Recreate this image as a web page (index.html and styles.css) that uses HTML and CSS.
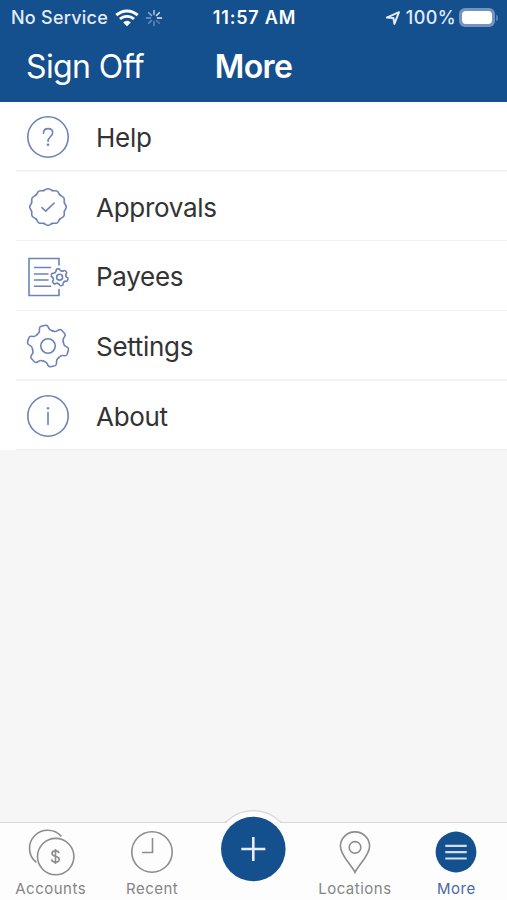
FILE: index.html
```html
<!DOCTYPE html>
<html lang="en">
<head>
	<title>More</title>
	<meta charset="UTF-8">
	<meta name="viewport" content="width=device-width, initial-scale=1.0">
	<link rel="stylesheet" href="styles.css">
</head>
<body>
	<!-- shared shapes: each wheel is one tooth repeated around the centre -->
	<svg class="defs" width="0" height="0">
		<defs>
			<path id="tooth" vector-effect="non-scaling-stroke" d="M-7.9-13.7L-6.9-14.3Q-5.1-15.3-4.8-17L-4.5-18.6Q-4.1-20.6-2.2-20.7H2.2Q4.1-20.6 4.5-18.6L4.8-17Q5.1-15.3 6.9-14.3L7.9-13.7"/>
			<g id="gear">
				<use href="#tooth" transform="rotate(-13)"/>
				<use href="#tooth" transform="rotate(47)"/>
				<use href="#tooth" transform="rotate(107)"/>
				<use href="#tooth" transform="rotate(167)"/>
				<use href="#tooth" transform="rotate(227)"/>
				<use href="#tooth" transform="rotate(287)"/>
				<circle r="7.2" vector-effect="non-scaling-stroke"/>
			</g>
			<path id="lobe" d="M-4.4-16.4C-2.8-16.6-2-18.3 0-18.3S2.8-16.6 4.4-16.4"/>
		</defs>
	</svg>

	<header>
		<div class="status">
			<div class="status-left">
				<span class="carrier">No Service</span>
				<svg class="wifi" width="24" height="18" viewBox="0 0 24 18">
					<path d="M1.3 6.2A15.5 15.5 0 0 1 22.7 6.2" stroke-width="3"/>
					<path d="M5 10.1A10.2 10.2 0 0 1 19 10.1" stroke-width="2.8"/>
					<path class="solid" d="M12 17.3L8.2 13.4A5.4 5.4 0 0 1 15.8 13.4Z"/>
				</svg>
				<svg class="spinner" width="18" height="18" viewBox="-9 -9 18 18">
					<path d="M0-3.5V-7.5" opacity=".7"/>
					<path d="M2.5-2.5L5.3-5.3" opacity=".9"/>
					<path d="M3.5 0H7.5"/>
					<path d="M2.5 2.5L5.3 5.3" opacity=".3"/>
					<path d="M0 3.5V7.5" opacity=".35"/>
					<path d="M-2.5 2.5L-5.3 5.3" opacity=".4"/>
					<path d="M-3.5 0H-7.5" opacity=".5"/>
					<path d="M-2.5-2.5L-5.3-5.3" opacity=".6"/>
				</svg>
			</div>
			<div class="clock">11:57 AM</div>
			<div class="status-right">
				<svg class="arrow" width="16" height="16" viewBox="0 0 16 16">
					<path d="M1.8 7.6L14 2.2L9.4 13.8L8.4 7.9Z"/>
				</svg>
				<span class="percent">100%</span>
				<span class="battery"><span class="charge"></span></span>
				<span class="battery-tip"></span>
			</div>
		</div>
		<div class="nav">
			<a class="sign-off">Sign Off</a>
			<h1>More</h1>
			<span></span>
		</div>
	</header>

	<main>
		<ul class="menu">
			<li>
				<svg class="icon" width="48" height="48" viewBox="0 0 48 48">
					<circle cx="24" cy="24" r="20.2"/>
					<path d="M19.5 20.2C19.5 17 21.4 15.6 24.1 15.6C26.8 15.6 28.7 17.2 28.7 19.7C28.7 23.4 24 23.7 24 28.2"/>
					<circle class="dot" cx="24" cy="31.8" r="1.3"/>
				</svg>
				<span>Help</span>
			</li>
			<li>
				<svg class="icon" width="48" height="48" viewBox="-24 -24 48 48">
					<use href="#lobe"/>
					<use href="#lobe" transform="rotate(30)"/>
					<use href="#lobe" transform="rotate(60)"/>
					<use href="#lobe" transform="rotate(90)"/>
					<use href="#lobe" transform="rotate(120)"/>
					<use href="#lobe" transform="rotate(150)"/>
					<use href="#lobe" transform="rotate(180)"/>
					<use href="#lobe" transform="rotate(210)"/>
					<use href="#lobe" transform="rotate(240)"/>
					<use href="#lobe" transform="rotate(270)"/>
					<use href="#lobe" transform="rotate(300)"/>
					<use href="#lobe" transform="rotate(330)"/>
					<path d="M-6 .6L-2.3 4.2L6.2-4"/>
				</svg>
				<span>Approvals</span>
			</li>
			<li>
				<svg class="icon" width="48" height="48" viewBox="0 0 48 48">
					<path d="M35 12V5.5H5V42.5H35V36.5"/>
					<path d="M10.5 14.5H26.5M10.5 21H24M10.5 27H24M10.5 33.2H26.5"/>
					<use href="#gear" transform="translate(35.6 24.2) scale(.41)"/>
				</svg>
				<span>Payees</span>
			</li>
			<li>
				<svg class="icon" width="48" height="48" viewBox="-24 -24 48 48">
					<use href="#gear"/>
				</svg>
				<span>Settings</span>
			</li>
			<li>
				<svg class="icon" width="48" height="48" viewBox="0 0 48 48">
					<circle cx="24" cy="24" r="20.2"/>
					<path d="M24 20.5V32.5"/>
					<circle class="dot" cx="24" cy="16.2" r="1.2"/>
				</svg>
				<span>About</span>
			</li>
		</ul>
	</main>

	<footer>
		<a class="tab">
			<svg width="48" height="48" viewBox="0 0 48 48">
				<circle cx="28.7" cy="28.6" r="18.2"/>
				<path d="M9.4 34.4A18.2 18.2 0 0 1 2.5 20.2A18.2 18.2 0 0 1 20.7 2.2A18.2 18.2 0 0 1 34.4 8.4"/>
				<path d="M32 25.2C31.8 23.6 30.5 22.9 28.5 22.9C26.3 22.9 25 23.9 25 25.5C25 29.3 32.2 27.1 32.2 31.3C32.2 33 30.7 34.1 28.5 34.1C26.2 34.1 24.8 33.1 24.6 31.4M28.5 21V36"/>
			</svg>
			<span>Accounts</span>
		</a>
		<a class="tab">
			<svg width="48" height="48" viewBox="0 0 48 48">
				<circle cx="24" cy="24" r="20.2"/>
				<path d="M24.5 10V24.5H14"/>
			</svg>
			<span>Recent</span>
		</a>
		<a class="tab add">
			<svg class="plus" width="80" height="76" viewBox="-40.3 -40 80 76">
				<path class="hump" d="M-27-25L-26.3-27.4A38 38 0 0 1 26.3-27.4L27-25Z"/>
				<path class="rim" d="M-29.5-26.7Q-27.6-26.7-26.3-27.9A38 38 0 0 1 26.3-27.9Q27.6-26.7 29.5-26.7"/>
				<circle r="32.3"/>
				<path class="cross" d="M-12 0H12M0-12V12"/>
			</svg>
		</a>
		<a class="tab">
			<svg width="48" height="48" viewBox="0 0 48 48">
				<path d="M24 44.5C21 37.5 9.4 27.5 9.4 18.2A14.6 14.3 0 0 1 38.6 18.2C38.6 27.5 27 37.5 24 44.5Z"/>
				<circle cx="24" cy="19.4" r="5.8"/>
			</svg>
			<span>Locations</span>
		</a>
		<a class="tab active">
			<svg width="48" height="48" viewBox="0 0 48 48">
				<circle cx="24" cy="24" r="20.4"/>
				<path d="M13.3 17.9H34.7M13.3 24.2H34.7M13.3 30.5H34.7"/>
			</svg>
			<span>More</span>
		</a>
	</footer>
</body>
</html>
```
FILE: styles.css
```css
* {
	box-sizing: border-box;
}

body {
	margin: 0;
	height: 100vh;
	display: flex;
	flex-direction: column;
	background-color: #f6f6f6;
	color: #333;
	font-family: Inter, "Liberation Sans", sans-serif;
	overflow: hidden;
}

svg {
	display: block;
	flex: none;
	fill: none;
}

.defs {
	position: absolute;
}

header {
	height: 102px;
	background-color: #144f8e;
	color: #fff;
}

.status {
	height: 35px;
	display: grid;
	grid-template-columns: 1fr auto 1fr;
	align-items: center;
	padding: 0 9px 0 11px;
	font-size: 18px;
	line-height: 35px;
}

.status-left,
.status-right {
	display: flex;
	align-items: center;
	color: #e3ecf8;
}

.status-right {
	justify-content: flex-end;
}

.carrier {
	letter-spacing: 0.25px;
	font-weight: 500;
}

.wifi {
	margin-left: 7px;
	stroke: #fff;
}

.wifi .solid {
	fill: #fff;
	stroke: none;
}

.spinner {
	margin-left: 6px;
	stroke: #e8effa;
	stroke-width: 1.6;
	stroke-linecap: round;
}

.clock {
	font-weight: 600;
	letter-spacing: 0.8px;
}

.arrow {
	margin-right: 5px;
	stroke: #e3ecf8;
	stroke-width: 2;
	stroke-linejoin: round;
}

.percent {
	font-weight: 500;
	letter-spacing: 0.4px;
}

.battery {
	width: 36px;
	height: 19px;
	margin-left: 3px;
	padding: 3px;
	border-radius: 6px;
	background-color: #7593bf;
}

.charge {
	display: block;
	height: 13px;
	border-radius: 4px;
	background-color: #fff;
}

.battery-tip {
	width: 2px;
	height: 6px;
	margin-left: 1px;
	border-radius: 0 2px 2px 0;
	background-color: #5b80b4;
}

.nav {
	height: 62px;
	display: grid;
	grid-template-columns: 1fr auto 1fr;
	align-items: center;
	padding: 0 26px;
}

.sign-off {
	font-size: 32px;
	letter-spacing: -0.6px;
}

h1 {
	margin: 0;
	font-size: 32px;
	font-weight: 600;
	letter-spacing: -0.6px;
}

main {
	flex: 1;
}

.menu {
	margin: 0;
	padding: 0;
	list-style: none;
	background-color: #fff;
}

.menu li {
	height: 69.7px;
	display: flex;
	align-items: center;
	padding: 1px 0 0 24px;
	font-size: 26px;
	letter-spacing: -0.3px;
	background: linear-gradient(#f0f0f0, #f0f0f0) 16px 100% / 100% 1.5px no-repeat;
}

.menu span {
	margin-left: 24px;
}

.icon {
	stroke: #6b83b8;
	stroke-width: 1.6;
	stroke-linecap: round;
}

.icon .dot {
	fill: #6b83b8;
	stroke: none;
}

footer {
	height: 78px;
	display: grid;
	grid-template-columns: repeat(5, 1fr);
	border-top: 1.5px solid #d8d8d8;
	background-color: #fdfdfd;
}

.tab {
	display: flex;
	flex-direction: column;
	align-items: center;
	padding-top: 5px;
	color: #858585;
	font-size: 15px;
	line-height: 20px;
	letter-spacing: 0.5px;
	stroke: #8d8d8d;
	stroke-width: 1.6;
}

.tab span {
	margin-top: 3px;
}

.add {
	padding-top: 0;
}

/* the round button rises above the bar */
.plus {
	margin-top: -14px;
}

.plus circle {
	fill: #144f8e;
	stroke: none;
}

.plus .hump {
	fill: #fdfdfd;
	stroke: none;
}

.plus .rim {
	stroke: #d8d8d8;
	stroke-width: 1.3;
}

.plus .cross {
	stroke: #e6edf8;
	stroke-width: 2.6;
}

.active {
	color: #4a68a5;
}

.active circle {
	fill: #144f8e;
	stroke: none;
}

.active path {
	stroke: #d3def0;
	stroke-width: 2.2;
}
```
